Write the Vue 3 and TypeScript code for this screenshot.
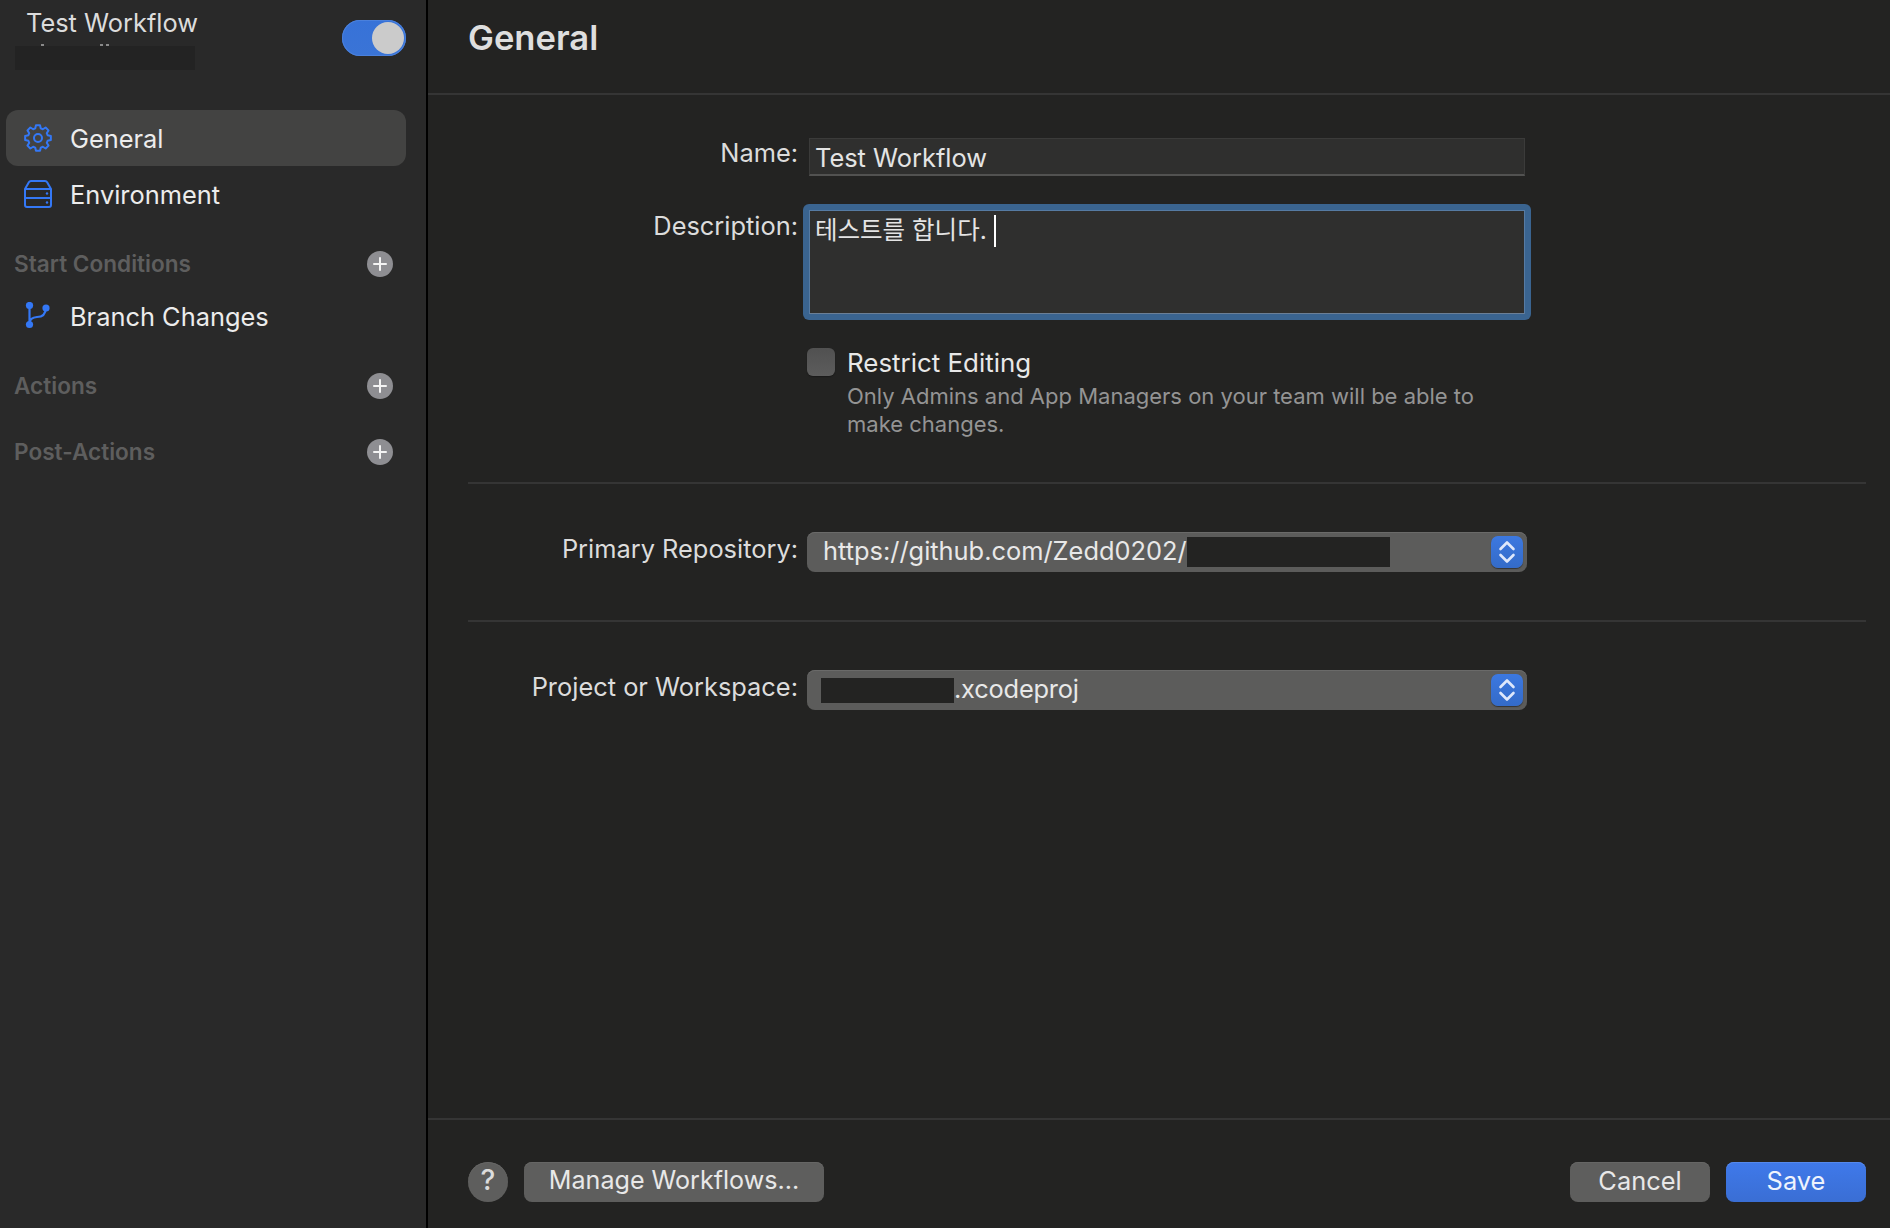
<script setup lang="ts">
import { computed } from 'vue'

const gearPath = computed(() => {
  const cx = 14, cy = 14, outer = 13, inner = 10, teeth = 8
  const step = (Math.PI * 2) / teeth
  const pts: string[] = []
  for (let i = 0; i < teeth; i++) {
    const a = i * step - Math.PI / 2
    const pairs: [number, number][] = [
      [inner, a - step * 0.36],
      [outer, a - step * 0.2],
      [outer, a + step * 0.2],
      [inner, a + step * 0.36],
    ]
    for (const [r, t] of pairs) {
      pts.push(`${(cx + r * Math.cos(t)).toFixed(2)} ${(cy + r * Math.sin(t)).toFixed(2)}`)
    }
  }
  return 'M' + pts.join('L') + 'Z'
})

const sections = ['Actions', 'Post-Actions']
</script>

<template>
  <div class="window">
    <aside class="sidebar">
      <div class="wf-head">
        <div class="wf-names">
          <div class="wf-title">Test Workflow</div>
          <div class="wf-traces"><i></i><i class="t2"></i><i class="t3"></i></div>
          <div class="wf-redact"></div>
        </div>
        <div class="toggle"><span class="knob"></span></div>
      </div>

      <nav class="nav">
        <div class="nav-item selected">
          <svg class="nav-icon" width="28" height="28" viewBox="0 0 28 28" fill="none" stroke="#3478f6" stroke-width="2" stroke-linejoin="round">
            <path :d="gearPath" />
            <circle cx="14" cy="14" r="4" />
          </svg>
          <span>General</span>
        </div>
        <div class="nav-item">
          <svg class="nav-icon" width="28" height="28" viewBox="0 0 28 28" fill="none" stroke="#3478f6" stroke-width="2" stroke-linejoin="round">
            <path d="M1 9 L5 2 Q5.5 1 7 1 H21 Q22.5 1 23 2 L27 9 V25 Q27 27 25 27 H3 Q1 27 1 25 Z" />
            <path d="M1 9 H27 M1 18 H27" />
            <circle cx="23" cy="13.5" r="1.2" fill="#3478f6" stroke="none" />
            <circle cx="23" cy="22.5" r="1.2" fill="#3478f6" stroke="none" />
          </svg>
          <span>Environment</span>
        </div>
      </nav>

      <div class="sec-head first">
        <span class="sec-name">Start Conditions</span>
        <span class="plus"></span>
      </div>
      <div class="nav-item branch">
        <svg class="nav-icon" width="28" height="28" viewBox="0 0 28 28" fill="none" stroke="#3478f6" stroke-width="2.2">
          <circle cx="5.5" cy="3.5" r="3.6" fill="#3478f6" stroke="none" />
          <circle cx="5.5" cy="22.5" r="3.6" fill="#3478f6" stroke="none" />
          <circle cx="22" cy="6" r="3.6" fill="#3478f6" stroke="none" />
          <path d="M5.5 3.5 V22.5 M5.5 21 Q6 15.5 13 15 Q21.5 15 22 6" />
        </svg>
        <span>Branch Changes</span>
      </div>
      <div v-for="(s, i) in sections" :key="s" class="sec-head" :class="i === 0 ? 'actions' : 'post'">
        <span class="sec-name">{{ s }}</span>
        <span class="plus"></span>
      </div>
    </aside>

    <main class="main">
      <header class="header">General</header>

      <section class="body">
        <div class="form-a">
          <label class="lbl name-lbl">Name:</label>
          <div class="text-field">Test Workflow</div>

          <label class="lbl desc-lbl">Description:</label>
          <div class="ring">
            <div class="area"><span class="ko">테스트를 합니다.</span><span class="caret"></span></div>
          </div>

          <div></div>
          <div class="restrict">
            <span class="check"></span>
            <div>
              <div class="restrict-title">Restrict Editing</div>
              <div class="restrict-help">Only Admins and App Managers on your team will be able to<br />make changes.</div>
            </div>
          </div>
        </div>

        <hr class="rule rule-a" />

        <div class="form-b">
          <label class="lbl">Primary Repository:</label>
          <div class="select">
            <span class="sel-text">https://github.com/Zedd0202/<span class="mask mask-repo"></span></span>
            <span class="stepper">
              <svg width="18" height="26" viewBox="0 0 18 26" fill="none" stroke="#dfe8fb" stroke-width="2.6" stroke-linecap="round" stroke-linejoin="round">
                <path d="M2.5 10 L9 3.5 L15.5 10 M2.5 16 L9 22.5 L15.5 16" />
              </svg>
            </span>
          </div>
        </div>

        <hr class="rule rule-b" />

        <div class="form-b">
          <label class="lbl lbl-proj">Project or Workspace:</label>
          <div class="select">
            <span class="sel-text"><span class="mask mask-proj"></span><span class="proj-ext">.xcodeproj</span></span>
            <span class="stepper">
              <svg width="18" height="26" viewBox="0 0 18 26" fill="none" stroke="#dfe8fb" stroke-width="2.6" stroke-linecap="round" stroke-linejoin="round">
                <path d="M2.5 10 L9 3.5 L15.5 10 M2.5 16 L9 22.5 L15.5 16" />
              </svg>
            </span>
          </div>
        </div>
      </section>

      <footer class="footer">
        <button class="help">?</button>
        <button class="btn manage">Manage Workflows...</button>
        <span class="spacer"></span>
        <button class="btn cancel">Cancel</button>
        <button class="btn save">Save</button>
      </footer>
    </main>
  </div>
</template>

<style>
html, body { margin: 0; background: #232322; }
</style>

<style scoped>
.window {
  display: flex;
  width: 1890px;
  height: 1228px;
  overflow: hidden;
  font-family: Inter, "Noto Sans CJK KR", "Liberation Sans", sans-serif;
  color: #e8e8e8;
  font-size: 25.4px;
}
.sidebar {
  flex: none;
  box-sizing: border-box;
  background: #292929;
  border-right: 2px solid #000;
  width: 428px;
  padding: 0 20px 0 6px;
}
.wf-head {
  display: flex;
  justify-content: space-between;
  height: 110px;
}
.wf-names { padding-left: 9px; }
.wf-title {
  margin-left: 11px;
  margin-top: 6px;
  line-height: 34px;
  color: #dcdcdc;
}
.wf-traces {
  position: relative;
  height: 2px;
  margin-top: 4px;
}
.wf-traces i {
  position: absolute;
  top: 0;
  left: 26px;
  width: 3px;
  height: 2px;
  background: #8a8a8a;
}
.wf-traces i.t2 { left: 85px; }
.wf-traces i.t3 { left: 91px; }
.wf-redact {
  width: 180px;
  height: 24px;
  background: #232323;
}
.toggle {
  box-sizing: border-box;
  width: 64px;
  height: 36px;
  margin-top: 20px;
  border-radius: 18px;
  background: linear-gradient(#3772d8, #3a74d6);
  box-shadow: inset 0 0 0 1px #4a80dc;
  display: flex;
  justify-content: flex-end;
  align-items: center;
  padding-right: 2px;
}
.knob { width: 32px; height: 32px; border-radius: 50%; background: #cbcbcb; }
.nav { display: flex; flex-direction: column; }
.nav-item {
  display: flex;
  align-items: center;
  height: 56px;
  padding-left: 18px;
  gap: 18px;
  border-radius: 12px;
  color: #ececec;
}
.nav-item.selected { background: #434342; }
.nav-icon { flex: none; }
.sec-head {
  display: flex;
  justify-content: space-between;
  align-items: center;
  height: 26px;
  margin-left: 8px;
  padding-right: 13px;
  font-size: 22.6px;
  font-weight: 600;
  color: #5e5e5e;
}
.sec-name { margin-top: -1px; }
.sec-head.first { margin-top: 29px; }
.sec-head.actions { margin-top: 30px; }
.sec-head.post { margin-top: 40px; }
.nav-item.branch { margin-top: 12px; height: 54px; }
.plus {
  position: relative;
  width: 26px;
  height: 26px;
  border-radius: 50%;
  background: #8e8e92;
  flex: none;
}
.plus::before, .plus::after {
  content: "";
  position: absolute;
  background: #f4f4f4;
  border-radius: 1px;
}
.plus::before { left: 6px; top: 12px; width: 14px; height: 2px; }
.plus::after { left: 12px; top: 6px; width: 2px; height: 14px; }

.main {
  flex: 1;
  display: flex;
  flex-direction: column;
  min-width: 0;
  background: #232322;
}
.header {
  box-sizing: border-box;
  height: 95px;
  flex: none;
  padding: 17px 0 0 40px;
  border-bottom: 2px solid #353535;
  font-size: 34.6px;
  font-weight: 600;
  line-height: 40px;
  color: #dedede;
}
.body {
  flex: 1;
  padding: 43px 24px 0 40px;
}
.form-a {
  display: grid;
  grid-template-columns: 330px 720px;
  column-gap: 9px;
}
.lbl {
  text-align: right;
  color: #dcdcdc;
  line-height: 30px;
}
.text-field {
  box-sizing: border-box;
  height: 38px;
  margin: 0 2px;
  padding-left: 5px;
  background: #2f2f2e;
  border: 1px solid #3b3b3a;
  border-bottom: 2px solid #525251;
  line-height: 38px;
  color: #e4e4e4;
}
.desc-lbl { margin-top: 35px; height: 30px; }
.ring {
  box-sizing: border-box;
  height: 116px;
  width: 728px;
  margin: 28px 0 0 -4px;
  padding: 6px;
  border-radius: 6px;
  background: #3a6490;
}
.area {
  box-sizing: border-box;
  height: 104px;
  padding: 4px 0 0 5px;
  background: #2f2f2e;
  border: 1px solid #567ba3;
  border-bottom-color: #6b7f96;
  line-height: 30px;
  color: #e4e4e4;
  display: flex;
  align-items: flex-start;
}
.ko { font-size: 24.5px; }
.caret {
  width: 2px;
  height: 32px;
  margin-left: 7px;
  background: #fff;
}
.restrict {
  display: flex;
  gap: 12px;
  margin-top: 28px;
}
.check {
  width: 28px;
  height: 28px;
  flex: none;
  border-radius: 6px;
  background: linear-gradient(#515151, #5c5c5c);
  box-shadow: 0 1px 1px #1a1a1a;
}
.restrict-title { font-size: 25.9px; line-height: 30px; color: #e8e8e8; }
.restrict-help {
  margin-top: 4px;
  font-size: 22px;
  line-height: 28px;
  color: #949494;
}
.rule { height: 2px; margin: 0; border: 0; background: #353535; }
.rule-a { margin-top: 44px; margin-bottom: 48px; }
.rule-b { margin-top: 48px; margin-bottom: 48px; }
.form-b {
  display: grid;
  grid-template-columns: 330px 720px;
  column-gap: 9px;
  height: 40px;
}
.form-b .lbl { line-height: 34px; }
.form-b .lbl-proj { margin-top: 0; }
.select {
  box-sizing: border-box;
  height: 40px;
  display: flex;
  align-items: center;
  justify-content: space-between;
  padding: 0 4px 0 16px;
  border-radius: 8px;
  background: #5c5c5b;
  box-shadow: inset 0 1px 0 #6a6a69;
  color: #e8e8e8;
  line-height: 38px;
}
.sel-text { display: flex; align-items: center; height: 38px; margin-top: -2px; }
.proj-ext { letter-spacing: -0.2px; }
.mask { display: block; height: 30px; margin-top: 2px; background: #232322; }
.mask-repo { width: 203px; }
.mask-proj { width: 133px; height: 25px; margin-left: -2px; }
.stepper {
  width: 32px;
  height: 32px;
  border-radius: 7px;
  background: linear-gradient(#3c78e0, #346bc8);
  display: flex;
  align-items: center;
  justify-content: center;
  box-shadow: 0 1px 1px #333;
}
.footer {
  flex: none;
  box-sizing: border-box;
  height: 110px;
  display: flex;
  align-items: flex-start;
  gap: 16px;
  padding: 42px 24px 0 40px;
  border-top: 2px solid #353535;
}
.spacer { flex: 1; }
button {
  font: inherit;
  margin: 0;
  padding: 0 0 4px;
  border: 0;
  color: #e8e8e8;
  height: 40px;
  background: #5e5e5d;
  box-shadow: inset 0 1px 0 #666665;
}
.help { width: 40px; border-radius: 50%; color: #dcdcdc; font-size: 28px; font-weight: 500; }
.btn { border-radius: 8px; }
.manage { width: 300px; font-size: 25.1px; }
.cancel, .save { width: 140px; }
.save {
  background: linear-gradient(#3f79ea, #3a6ed4);
  box-shadow: inset 0 1px 0 #5589ec;
  color: #eef3fd;
}
</style>
